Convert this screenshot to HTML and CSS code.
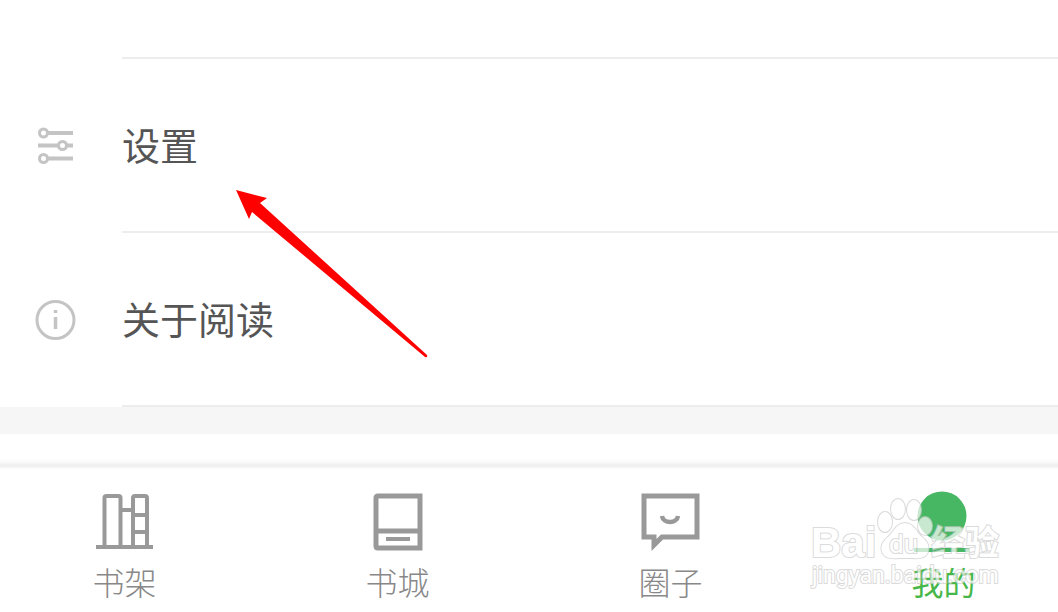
FILE: index.html
```html
<!DOCTYPE html>
<html lang="zh-CN">
<head>
    <meta charset="UTF-8">
    <meta name="viewport" content="width=device-width, initial-scale=1.0">
    <title>我的</title>
    <link rel="stylesheet" href="styles.css">
</head>
<body>
    <main class="menu">
        <div class="menu-top"></div>
        <a class="menu-item" href="#settings">
            <svg class="menu-icon" viewBox="0 0 42 42" fill="none" stroke="#c4c4c4" stroke-width="3">
                <path d="M12 8h26M3 20.5h20M31 20.5h7M12 33.5h26" stroke-width="4"/>
                <circle cx="8.5" cy="8" r="4"/>
                <circle cx="27.5" cy="20.5" r="4"/>
                <circle cx="8.5" cy="33.5" r="4"/>
            </svg>
            <span class="menu-text">设置</span>
        </a>
        <a class="menu-item" href="#about">
            <svg class="menu-icon" viewBox="0 0 42 42" fill="none" stroke="#c4c4c4" stroke-width="3">
                <circle cx="20.5" cy="21" r="18.5"/>
                <path d="M20.5 18v12M20.5 11v3" stroke-width="3.5"/>
            </svg>
            <span class="menu-text">关于阅读</span>
        </a>
        <div class="divider"></div>
    </main>

    <nav class="tabs">
        <a class="tab" href="#shelf">
            <svg class="tab-icon" viewBox="0 0 60 60" fill="none" stroke="#999" stroke-width="4">
                <path d="M1 59h57"/>
                <path d="M9.5 58V10q0-2 2-2h12q2 0 2 2v48M38 58V10q0-2 2-2h10q2 0 2 2v48M25 22h12M38 27h13M38 44h13"/>
            </svg>
            <span>书架</span>
        </a>
        <a class="tab" href="#store">
            <svg class="tab-icon" viewBox="0 0 60 60" fill="none" stroke="#999" stroke-width="5">
                <path d="M52 8H10q-2 0-2 2v48q0 2 2 2h42zM8 43h44"/>
                <path d="M18 51h24" stroke-width="4"/>
            </svg>
            <span>书城</span>
        </a>
        <a class="tab" href="#circle">
            <svg class="tab-icon" viewBox="0 0 60 60" fill="none" stroke="#999" stroke-width="5">
                <path d="M3 8h53v41H21l-8 8v-8H3z"/>
                <path d="M21 28c1 8 15 8 16 0" stroke-width="4.5"/>
            </svg>
            <span>圈子</span>
        </a>
        <a class="tab active" href="#mine">
            <svg class="tab-icon" viewBox="0 0 60 60" fill="#48b764">
                <circle cx="28" cy="28" r="24.5"/>
                <path d="M0 60h56v4H0z"/>
            </svg>
            <span>我的</span>
        </a>
    </nav>

    <svg class="arrow" viewBox="0 0 194 170">
        <path fill="#f00" d="M0 0L31 8L24 13L191 165Q192 168 189 167L16 22L13 29Z"/>
    </svg>

    <svg class="watermark" viewBox="0 0 200 100">
        <g class="mark">
            <text class="mark-bai" x="0" y="62">Bai</text>
            <ellipse cx="74" cy="27" rx="7" ry="10"/>
            <ellipse cx="87" cy="14" rx="7" ry="10"/>
            <ellipse cx="103" cy="15" rx="7" ry="10"/>
            <ellipse cx="114" cy="31" rx="7" ry="9"/>
            <path d="M94 28c-9 0-11 9-17 14c-5 4-8 9-6 15c3 8 12 6 23 6s20 2 23-6c2-6-1-11-6-15c-6-5-8-14-17-14z"/>
            <text class="mark-du" x="78" y="58">du</text>
            <text class="mark-jy" x="120" y="60">经验</text>
            <text class="mark-url" x="1" y="88">jingyan.baidu.com</text>
        </g>
    </svg>
</body>
</html>
```
FILE: styles.css
```css
* {
    box-sizing: border-box;
}

body {
    position: relative;
    margin: 0;
    overflow: hidden;
    background-color: #fff;
    color: #555;
    font-family: "Noto Sans CJK SC", sans-serif;
}

a {
    color: inherit;
    text-decoration: none;
}

svg {
    display: block;
}

.menu-top {
    height: 59px;
    margin-left: 122px;
    border-bottom: 2px solid #ededed;
}

.menu-item {
    display: flex;
    align-items: center;
    height: 174px;
    padding-left: 35px;
}

.menu-icon {
    width: 42px;
    height: 42px;
    margin-right: 45px;
}

.menu-text {
    display: flex;
    flex: 1;
    align-items: center;
    height: 100%;
    padding-bottom: 2px;
    border-bottom: 2px solid #ededed;
    font-size: 38px;
    line-height: 56px;
}

.divider {
    height: 27px;
    background-color: #f6f6f6;
}

.tabs {
    display: grid;
    grid-template-columns: repeat(4, 1fr);
    margin: 24px -22px 0 -12px;
    padding-top: 30px;
    background: linear-gradient(#fff, #fafafa 4px, #ededed 8px, #fafafa 10px, #fff 12px);
}

.tab {
    display: flex;
    flex-direction: column;
    align-items: center;
    color: #888;
    font-size: 32px;
    font-weight: 300;
    line-height: 48px;
}

.tab-icon {
    width: 60px;
    height: 60px;
    margin-bottom: 9px;
    overflow: visible;
}

.tab.active {
    color: #48b749;
    font-weight: 400;
}

.arrow {
    position: absolute;
    top: 190px;
    left: 236px;
    width: 194px;
    height: 170px;
}

.watermark {
    position: absolute;
    top: 495px;
    right: 47px;
    width: 200px;
    height: 100px;
    overflow: visible;
    pointer-events: none;
}

.mark {
    fill: #fff;
    stroke: #ccc;
    stroke-width: 2px;
    paint-order: stroke;
    opacity: 0.7;
    font-family: "Liberation Sans", "Noto Sans CJK SC", sans-serif;
}

.mark-bai {
    font-size: 42px;
    font-weight: 700;
}

.mark-du {
    font-family: Roboto, sans-serif;
    font-size: 26px;
}

.mark-jy {
    font-size: 34px;
    font-weight: 700;
}

.mark-url {
    font-family: Roboto, sans-serif;
    font-size: 23px;
}
```
